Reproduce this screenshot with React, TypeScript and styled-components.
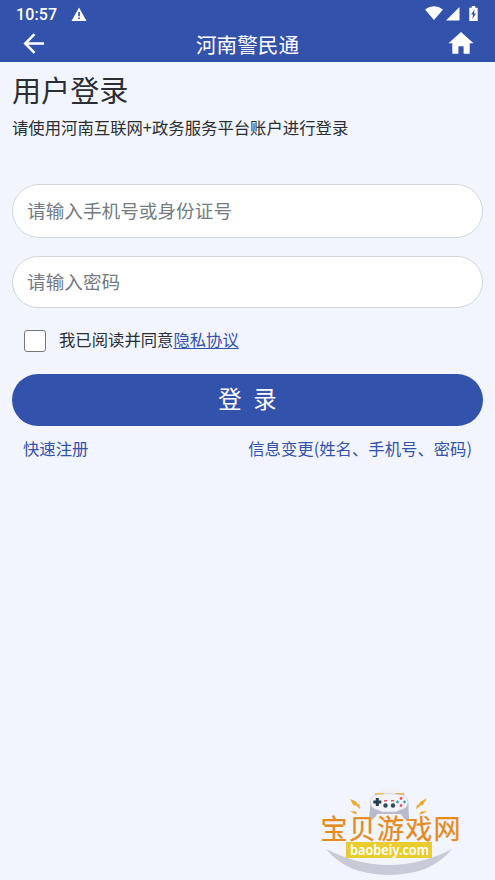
import React from 'react';
import styled, { createGlobalStyle } from 'styled-components';

const BLUE = '#3352ab';
const CJK = '"Noto Sans CJK SC", sans-serif';

const GlobalStyle = createGlobalStyle`
  * { box-sizing: border-box; }
  html, body { margin: 0; padding: 0; background: #f2f5fd; }
  body { font-family: ${CJK}; color: #2a2e33; }
`;

const Screen = styled.div`
  position: relative;
  height: 880px;
  overflow: hidden;
  background: #f2f5fd;
`;

const Header = styled.header`
  height: 62px;
  background: ${BLUE};
  color: #fff;
`;

const StatusBar = styled.div`
  display: flex;
  justify-content: space-between;
  height: 28px;
  padding: 0 15px 0 16px;
`;

const StatusGroup = styled.div<{ $gap: number }>`
  display: flex;
  align-items: center;
  gap: ${(p) => p.$gap}px;
`;

const Clock = styled.span`
  font: 500 16px/28px Roboto, sans-serif;
  letter-spacing: 0.1px;
  padding-top: 2px;
`;

const NavBar = styled.div`
  display: grid;
  grid-template-columns: 34px 1fr 34px;
  align-items: center;
  height: 32px;
  padding: 0 17px;
`;

const NavButton = styled.button`
  display: flex;
  justify-content: center;
  align-items: center;
  padding: 0;
  border: 0;
  background: none;
  color: inherit;
`;

const NavTitle = styled.h1`
  margin: 0;
  font-size: 20.6px;
  font-weight: 400;
  line-height: 30px;
  text-align: center;
`;

const Main = styled.main`
  padding: 5px 12px 0;
`;

const Heading = styled.h2`
  margin: 0;
  font-size: 29.1px;
  font-weight: 400;
  line-height: 44px;
`;

const Intro = styled.p`
  margin: 4px 0 44px;
  font-size: 16.37px;
  line-height: 25px;
`;

const Field = styled.input<{ $height: number }>`
  display: block;
  width: 100%;
  height: ${(p) => p.$height}px;
  margin-bottom: 18px;
  padding: 0 15px 3px 14px;
  border: 1px solid #d2d6dd;
  border-radius: 27px;
  outline: none;
  background: #fff;
  font: 400 18.65px ${CJK};
  &::placeholder { color: #747b83; opacity: 1; }
`;

const Agreement = styled.label`
  display: flex;
  align-items: center;
  height: 24px;
  margin: 20px 0 22px 12px;
  font-size: 16.35px;
  line-height: 24px;
`;

const AgreementText = styled.span`
  padding-bottom: 2px;
`;

const Checkbox = styled.input`
  appearance: none;
  width: 22px;
  height: 22px;
  margin: 1px 13px 0 0;
  border: 1px solid #777;
  border-radius: 3px;
  background: #fff;
`;

const Link = styled.a<{ $underline?: boolean }>`
  color: ${BLUE};
  text-decoration: ${(p) => (p.$underline ? 'underline' : 'none')};
  text-decoration-thickness: 1px;
  text-underline-offset: 2px;
`;

const Submit = styled.button`
  display: block;
  width: 100%;
  height: 52px;
  padding: 0 0 5px;
  border: 0;
  border-radius: 26px;
  background: ${BLUE};
  color: #fff;
  font: 400 23.4px ${CJK};
  word-spacing: 6.4px;
`;

const Links = styled.nav`
  display: flex;
  justify-content: space-between;
  padding: 10px 11px 0 11px;
  font-size: 16.37px;
  line-height: 25px;
`;

const Watermark = styled.svg`
  position: absolute;
  left: 315px;
  top: 785px;
`;

export default function App() {
  return (
    <Screen>
      <GlobalStyle />
      <Header>
        <StatusBar>
          <StatusGroup $gap={14}>
            <Clock>10:57</Clock>
            <svg width="16" height="14" viewBox="0 0 16 14">
              <path d="M8 .5 15.5 14H.5Z" fill="#fff" />
              <path d="M7.2 5h1.7v4.2H7.2zM7.2 10.4h1.7V12H7.2z" fill={BLUE} />
            </svg>
          </StatusGroup>
          <StatusGroup $gap={0}>
            <svg width="56" height="18" viewBox="0 0 56 18" fill="#fff">
              <path d="M1 4.5Q10-1.8 19 4.5L10 15Z" />
              <path d="M35.5 2v13.5H22Z" />
              <path d="M47.8 1h3.4v1.7h2.5v13.2h-8.4V2.7h2.5z" />
              <path d="m50.7 4.5-3.7 5h2.1l-.8 4.4 3.8-5.3H50z" fill={BLUE} />
            </svg>
          </StatusGroup>
        </StatusBar>
        <NavBar>
          <NavButton aria-label="返回">
            <svg width="22" height="22" viewBox="0 0 22 22" fill="none" stroke="#fff" strokeWidth="2.5">
              <path d="M21 10.5H3M11.5 1.2 2.2 10.5l9.3 9.3" />
            </svg>
          </NavButton>
          <NavTitle>河南警民通</NavTitle>
          <NavButton aria-label="首页">
            <svg width="26" height="24" viewBox="0 0 26 24">
              <path d="M13 0 25.5 11.3H21.7V21.7H15.6V14.3H10.4V21.7H4.3V11.3H.5Z" fill="#fff" />
            </svg>
          </NavButton>
        </NavBar>
      </Header>
      <Main>
        <Heading>用户登录</Heading>
        <Intro>请使用河南互联网+政务服务平台账户进行登录</Intro>
        <Field $height={54} placeholder="请输入手机号或身份证号" />
        <Field $height={52} type="password" placeholder="请输入密码" />
        <Agreement>
          <Checkbox type="checkbox" />
          <AgreementText>我已阅读并同意<Link $underline>隐私协议</Link></AgreementText>
        </Agreement>
        <Submit>登 录</Submit>
        <Links>
          <Link>快速注册</Link>
          <Link>信息变更(姓名、手机号、密码)</Link>
        </Links>
      </Main>
      <Watermark width="155" height="95" viewBox="315 785 155 95">
        <circle cx="390" cy="806" r="18" fill="#f3f1f1" />
        <path d="M326 849Q389 881 452 849 431 875 389 875 347 875 326 849Z" fill="#c9cad8" />
        <path d="M376 796v-2h7v2M396 796v-2h7v2" fill="none" stroke="#efb447" strokeWidth="2" />
        <path d="M375 796Q389 793 403 796 409 798 408.500 808L409 819Q405 822 401 814H377Q373 822 369 819L370.500 804Q370 798 375 796Z" fill="#b9bacb" />
        <path d="M375 795Q389 792 403 795 408 797 408 803 407 809 400 810L396 812H382L378 810Q371 809 370.500 803 370 797 375 795Z" fill="#f3f3f8" stroke="#c5c6d6" strokeWidth=".6" />
        <path d="M377.300 798v8M373.300 802h8" stroke="#283e4d" strokeWidth="3" />
        <g fill="#df5961">
          <circle cx="401" cy="798.500" r="1.400" />
          <circle cx="401" cy="805.500" r="1.400" />
          <path d="M384 800h3v1.500h-3zM391 800h3v1.500h-3z" />
        </g>
        <g fill="#38a2b8"><circle cx="397.500" cy="802" r="1.400" /><circle cx="404.500" cy="802" r="1.400" /></g>
        <g fill="#30495b"><circle cx="385.500" cy="805.500" r="2.200" /><circle cx="393" cy="805.500" r="2.200" /></g>
        <g fill="#efa72e">
          <path d="m350 799 6 2.500 1.500 3 2-.5.5 5-4.500-4-2 .5zM427 798l-7 4-1.500 3-1.500-.5-1 5 5-4.500 1.500.5z" />
          <path d="m350 811 6 .5 1 3-3-1zM427 811l-6 .5-2 3 4-1z" />
        </g>
        <text x="320.500" y="838.500" textLength="140" lengthAdjust="spacing" fill="#e58a20" fontFamily="Noto Sans CJK SC, sans-serif" fontSize="27" fontWeight="400" stroke="#e58a20" strokeWidth=".25">宝贝游戏网</text>
        <rect x="346" y="842" width="86" height="16" fill="#e9cd2e" />
        <text x="350" y="855" textLength="79" lengthAdjust="spacingAndGlyphs" fill="#fff" fontFamily="Noto Sans, sans-serif" fontSize="15" fontWeight="600">baobeiy.com</text>
      </Watermark>
    </Screen>
  );
}
